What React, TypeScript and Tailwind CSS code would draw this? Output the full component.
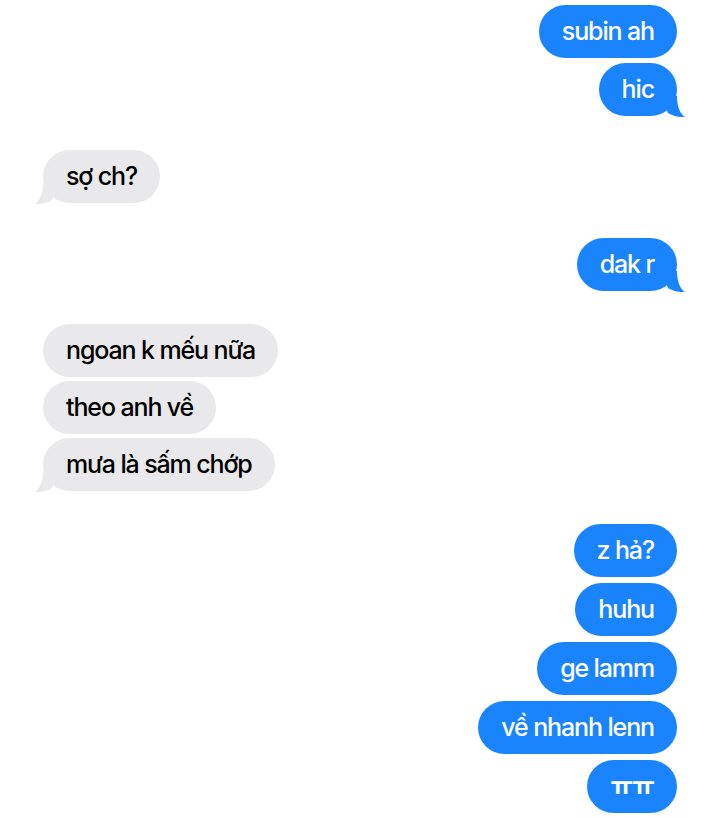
import React from "react";

type Msg = { text: string; tail?: boolean; bold?: boolean };

// mt = space above the group, gap = space between bubbles inside it
const groups: { me: boolean; mt: string; gap: string; msgs: Msg[] }[] = [
  { me: true, mt: "mt-[5px]", gap: "gap-[5px]", msgs: [{ text: "subin ah" }, { text: "hic", tail: true }] },
  { me: false, mt: "mt-[34px]", gap: "gap-[5px]", msgs: [{ text: "sợ ch?", tail: true }] },
  { me: true, mt: "mt-[35px]", gap: "gap-[5px]", msgs: [{ text: "dak r", tail: true }] },
  {
    me: false,
    mt: "mt-[33px]",
    gap: "gap-[4px]",
    msgs: [{ text: "ngoan k mếu nữa" }, { text: "theo anh về" }, { text: "mưa là sấm chớp", tail: true }],
  },
  {
    me: true,
    mt: "mt-[33px]",
    gap: "gap-[6px]",
    msgs: [
      { text: "z hả?" },
      { text: "huhu" },
      { text: "ge lamm" },
      { text: "về nhanh lenn" },
      { text: "ㅠㅠ", bold: true },
    ],
  },
];

function Tail({ me }: { me: boolean }) {
  return (
    <svg
      width="20"
      height="21"
      viewBox="0 0 20 21"
      className={`absolute bottom-[-1px] ${me ? "right-[-8px] text-[#1a84ff]" : "left-[-8px] text-[#e9e9eb] -scale-x-100"}`}
    >
      <path d="M6 0 L12 0 C12 10 15 18 20 21 C14 21.5 8 20 3 17 L0 10 Z" fill="currentColor" />
    </svg>
  );
}

function Bubble({ msg, me }: { msg: Msg; me: boolean }) {
  return (
    <div
      className={`relative h-[53px] px-[23px] rounded-full flex items-center text-[25px] tracking-[-0.045em] ${
        msg.bold ? "font-bold" : "font-medium"
      } ${me ? "bg-[#1a84ff] text-white" : "bg-[#e9e9eb] text-black"}`}
    >
      <span className="leading-none pb-[1px]">{msg.text}</span>
      {msg.tail && <Tail me={me} />}
    </div>
  );
}

export default function App() {
  return (
    <div
      className="w-[720px] h-[817px] overflow-hidden bg-white px-[43px] flex flex-col"
      style={{ fontFamily: "Inter, 'Noto Sans CJK KR', sans-serif" }}
    >
      {groups.map((g, gi) => (
        <div key={gi} className={`flex flex-col ${g.mt} ${g.gap} ${g.me ? "items-end" : "items-start"}`}>
          {g.msgs.map((m, mi) => (
            <Bubble key={mi} msg={m} me={g.me} />
          ))}
        </div>
      ))}
    </div>
  );
}
